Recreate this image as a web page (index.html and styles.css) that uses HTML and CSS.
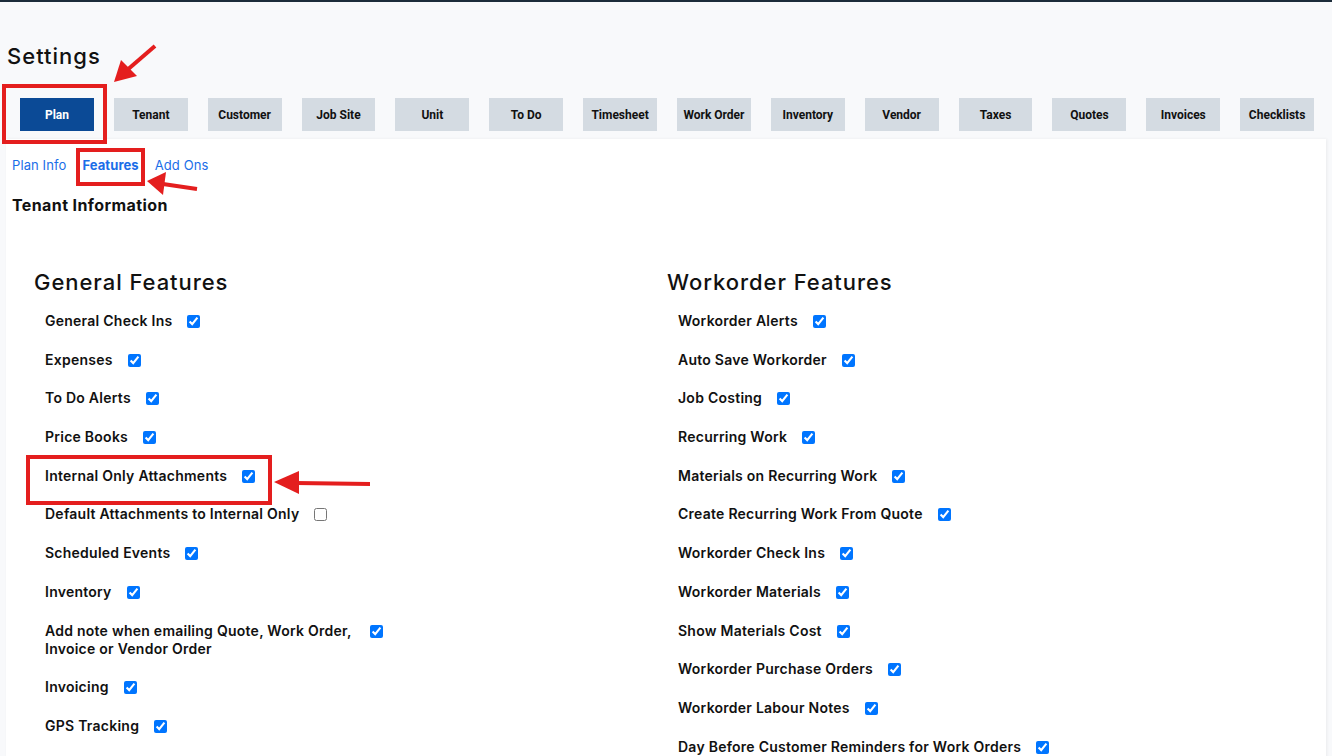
FILE: index.html
```html
<!DOCTYPE html>
<html lang="en">
<head>
<meta charset="utf-8">
<title>Settings</title>
<link rel="stylesheet" href="styles.css">
</head>
<body>
<div class="page">
  <h1 class="page-title">Settings</h1>
  <nav class="tabs">
    <button class="tab active">Plan</button>
    <button class="tab">Tenant</button>
    <button class="tab">Customer</button>
    <button class="tab">Job Site</button>
    <button class="tab">Unit</button>
    <button class="tab">To Do</button>
    <button class="tab">Timesheet</button>
    <button class="tab">Work Order</button>
    <button class="tab">Inventory</button>
    <button class="tab">Vendor</button>
    <button class="tab">Taxes</button>
    <button class="tab">Quotes</button>
    <button class="tab">Invoices</button>
    <button class="tab">Checklists</button>
  </nav>
  <section class="card">
    <div class="subtabs">
      <a class="subtab">Plan Info</a>
      <a class="subtab current">Features</a>
      <a class="subtab">Add Ons</a>
    </div>
    <h2 class="card-title">Tenant Information</h2>
    <div class="columns">
      <div class="col">
        <h3 class="col-title">General Features</h3>
        <label class="feat"><span class="name">General Check Ins</span><input type="checkbox" checked></label>
        <label class="feat"><span class="name">Expenses</span><input type="checkbox" checked></label>
        <label class="feat"><span class="name">To Do Alerts</span><input type="checkbox" checked></label>
        <label class="feat"><span class="name">Price Books</span><input type="checkbox" checked></label>
        <label class="feat"><span class="name">Internal Only Attachments</span><input type="checkbox" checked></label>
        <label class="feat"><span class="name">Default Attachments to Internal Only</span><input type="checkbox"></label>
        <label class="feat"><span class="name">Scheduled Events</span><input type="checkbox" checked></label>
        <label class="feat"><span class="name">Inventory</span><input type="checkbox" checked></label>
        <label class="feat"><span class="name wrap">Add note when emailing Quote, Work Order, Invoice or Vendor Order</span><input type="checkbox" checked></label>
        <label class="feat"><span class="name">Invoicing</span><input type="checkbox" checked></label>
        <label class="feat"><span class="name">GPS Tracking</span><input type="checkbox" checked></label>
      </div>
      <div class="col">
        <h3 class="col-title">Workorder Features</h3>
        <label class="feat"><span class="name">Workorder Alerts</span><input type="checkbox" checked></label>
        <label class="feat"><span class="name">Auto Save Workorder</span><input type="checkbox" checked></label>
        <label class="feat"><span class="name">Job Costing</span><input type="checkbox" checked></label>
        <label class="feat"><span class="name">Recurring Work</span><input type="checkbox" checked></label>
        <label class="feat"><span class="name">Materials on Recurring Work</span><input type="checkbox" checked></label>
        <label class="feat"><span class="name">Create Recurring Work From Quote</span><input type="checkbox" checked></label>
        <label class="feat"><span class="name">Workorder Check Ins</span><input type="checkbox" checked></label>
        <label class="feat"><span class="name">Workorder Materials</span><input type="checkbox" checked></label>
        <label class="feat"><span class="name">Show Materials Cost</span><input type="checkbox" checked></label>
        <label class="feat"><span class="name">Workorder Purchase Orders</span><input type="checkbox" checked></label>
        <label class="feat"><span class="name">Workorder Labour Notes</span><input type="checkbox" checked></label>
        <label class="feat"><span class="name">Day Before Customer Reminders for Work Orders</span><input type="checkbox" checked></label>
      </div>
    </div>
  </section>
</div>

<!-- red call-outs drawn over the page -->
<div class="callout box-plan"></div>
<div class="callout box-features"></div>
<div class="callout box-internal"></div>
<svg class="arrows" width="1332" height="756" viewBox="0 0 1332 756">
  <g fill="#e41e1e" stroke="#e41e1e" stroke-width="4" stroke-linecap="butt">
    <line x1="155" y1="44" x2="126" y2="69"/>
    <polygon points="114,80 121,58 137,74" stroke="none"/>
    <line x1="197" y1="187" x2="163" y2="182"/>
    <polygon points="147,179 166,170 163,193" stroke="none"/>
    <line x1="370" y1="482" x2="296" y2="481"/>
    <polygon points="274,480 299,469 299,492" stroke="none"/>
  </g>
</svg>
</body>
</html>
```
FILE: styles.css
```css
html, body {
  margin: 0;
  padding: 0;
}

body {
  background: #f8f9fb;
  font-family: "Inter", "Noto Sans", sans-serif;
  color: #111;
  width: 1332px;
  height: 756px;
  overflow: hidden;
  position: relative;
  border-top: 2px solid #1c2c3a;
  box-sizing: border-box;
}

.page {
  display: flex;
  flex-direction: column;
}

.page-title {
  margin: 41px 0 0 7px;
  font-size: 22px;
  font-weight: 500;
  line-height: 26px;
  letter-spacing: 1px;
  color: #111;
}

.tabs {
  display: flex;
  gap: 20px;
  padding: 0 18px 0 20px;
  margin-top: 29px;
}

.tab {
  flex: 1;
  height: 33px;
  border: 0;
  border-radius: 0;
  background: #d4dbe2;
  font-family: "Roboto", sans-serif;
  font-weight: 700;
  font-size: 12px;
  color: #111;
  padding: 0;
}

.tab.active {
  background: #0b4a96;
  color: #fff;
}

.card {
  margin: 8px 6px 0 6px;
  background: #fff;
  box-shadow: 1px 0 3px rgba(0, 0, 0, 0.06);
  padding: 17px 0 0 0;
  min-height: 620px;
}

.subtabs {
  display: flex;
  gap: 16px;
  padding-left: 6px;
  font-size: 13px;
  line-height: 18px;
  letter-spacing: 0.1px;
}

.subtab {
  color: #1a6ee8;
  cursor: pointer;
}

.subtab.current {
  font-weight: 700;
}

.card-title {
  margin: 21px 0 0 6px;
  font-size: 16px;
  font-weight: 700;
  line-height: 20px;
  letter-spacing: 0.4px;
}

.columns {
  display: grid;
  grid-template-columns: 1fr 1fr;
  margin-top: 55px;
}

.col {
  padding-left: 28px;
  display: flex;
  flex-direction: column;
  align-items: flex-start;
}

.col:last-child {
  padding-left: 1px;
}

.col-title {
  margin: 0 0 18px 0;
  font-size: 22px;
  font-weight: 500;
  line-height: 24px;
  letter-spacing: 0.95px;
}

.feat {
  display: flex;
  align-items: flex-start;
  margin-left: 11px;
  margin-bottom: 20.7px;
  font-size: 14px;
  font-weight: 600;
  line-height: 18px;
  letter-spacing: 0.25px;
}

.feat .name.wrap {
  max-width: 310px;
}

.feat input {
  margin: 3px 0 0 15px;
  width: 13px;
  height: 13px;
}

.callout {
  position: absolute;
  border: 4px solid #e41e1e;
  box-sizing: border-box;
}

.box-plan {
  left: 2px;
  top: 82px;
  width: 105px;
  height: 60px;
}

.box-features {
  left: 76px;
  top: 146px;
  width: 69px;
  height: 38px;
}

.box-internal {
  left: 26px;
  top: 453px;
  width: 246px;
  height: 50px;
}

.arrows {
  position: absolute;
  left: 0;
  top: 0;
  pointer-events: none;
}
```
